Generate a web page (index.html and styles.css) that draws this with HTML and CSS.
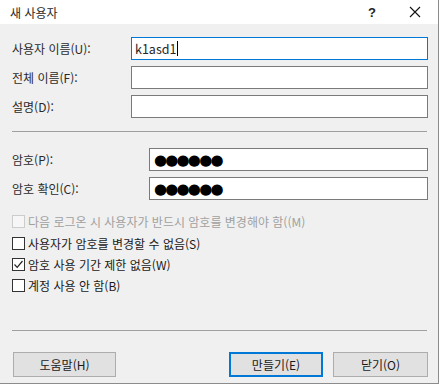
FILE: index.html
```html
<!DOCTYPE html>
<html lang="ko">
<head>
  <meta charset="UTF-8">
  <title>새 사용자</title>
  <link rel="stylesheet" href="styles.css">
</head>
<body>
  <div class="dialog">
    <!-- Barra de título -->
    <div class="titlebar">
      <span class="title">새 사용자</span>
      <span class="help">?</span>
      <span class="close">
        <svg width="12" height="12" viewBox="0 0 12 12"><path d="M1 1 L11 11 M11 1 L1 11" stroke="#111" stroke-width="1.1" fill="none"/></svg>
      </span>
    </div>

    <div class="content">
      <div class="row">
        <label class="label">사용자 이름(U):</label>
        <div class="field focus">k1asd1<span class="caret"></span></div>
      </div>
      <div class="row">
        <label class="label">전체 이름(F):</label>
        <div class="field"></div>
      </div>
      <div class="row">
        <label class="label">설명(D):</label>
        <div class="field"></div>
      </div>

      <div class="separator sep-top"></div>

      <div class="row">
        <label class="label wide">암호(P):</label>
        <div class="field dots">●●●●●●</div>
      </div>
      <div class="row">
        <label class="label wide">암호 확인(C):</label>
        <div class="field dots">●●●●●●</div>
      </div>

      <div class="checks">
        <div class="check disabled"><span class="box"></span>다음 로그온 시 사용자가 반드시 암호를 변경해야 함((M)</div>
        <div class="check"><span class="box"></span>사용자가 암호를 변경할 수 없음(S)</div>
        <div class="check"><span class="box">
          <svg width="11" height="11" viewBox="0 0 11 11"><path d="M1.5 5.5 L4.2 8.3 L9.5 2" stroke="#222" stroke-width="1.2" fill="none"/></svg>
        </span>암호 사용 기간 제한 없음(W)</div>
        <div class="check"><span class="box"></span>계정 사용 안 함(B)</div>
      </div>

      <div class="separator sep-bottom"></div>

      <div class="buttons">
        <button class="btn btn-help">도움말(H)</button>
        <div class="spacer"></div>
        <button class="btn btn-default">만들기(E)</button>
        <button class="btn">닫기(O)</button>
      </div>
    </div>
  </div>
</body>
</html>
```

FILE: styles.css
```css
/* Corpo da página */
body {
  margin: 0;
  background-color: #ffffff;
  font-family: "Noto Sans CJK KR", "Noto Sans", sans-serif;
  font-size: 12px;
  color: #262626;
}

/* Janela do diálogo */
.dialog {
  width: 438px;
  height: 383px;
  display: flex;
  flex-direction: column;
  border-right: 1px solid #8c8c8c;
  border-bottom: 1px solid #8c8c8c;
}

/* Barra de título */
.titlebar {
  height: 24px;
  background-color: #ffffff;
  display: flex;
  align-items: center;
  padding-left: 10px;
}

.title {
  flex: 1;
  font-size: 12px;
}

.help {
  width: 20px;
  font-family: "Liberation Sans", sans-serif;
  font-size: 13px;
  font-weight: bold;
  color: #222;
}

.close {
  width: 46px;
  display: flex;
  justify-content: center;
  padding-left: 4px;
}

/* Área principal */
.content {
  flex: 1;
  background-color: #f0f0f0;
  padding: 13px 10px 0 12px;
  display: flex;
  flex-direction: column;
}

.row {
  display: flex;
  align-items: center;
  height: 23px;
  margin-bottom: 6px;
}

.label {
  width: 119px;
  color: #2a2a2a;
}

.label.wide {
  width: 137px;
}

.field {
  flex: 1;
  height: 21px;
  border: 1px solid #7a7a7a;
  background-color: #ffffff;
  box-sizing: content-box;
  display: flex;
  align-items: center;
  padding-left: 3px;
  font-size: 12.5px;
}

.field.focus {
  border-color: #0078d7;
}

.caret {
  display: inline-block;
  width: 1px;
  height: 15px;
  background-color: #000;
  margin-left: 1px;
}

.dots {
  font-family: "DejaVu Sans", sans-serif;
  font-size: 15px;
  letter-spacing: -1.8px;
  color: #000;
  padding-left: 4px;
}

/* Separadores */
.separator {
  height: 1px;
  background-color: #a0a0a0;
  margin-right: 1px;
}

.sep-top {
  margin-top: 7px;
  margin-bottom: 16px;
}

.sep-bottom {
  margin-top: 33px;
}

/* Caixas de seleção */
.checks {
  margin-top: 5px;
  display: flex;
  flex-direction: column;
}

.check {
  height: 21.4px;
  display: flex;
  align-items: center;
  color: #1a1a1a;
}

.check .box {
  width: 11px;
  height: 11px;
  border: 1px solid #333;
  background-color: #ffffff;
  margin-right: 3px;
  display: flex;
  align-items: center;
  justify-content: center;
}

.check.disabled {
  color: #a0a0a0;
}

.check.disabled .box {
  border-color: #cccccc;
  background-color: #f6f6f6;
}

/* Botões */
.buttons {
  display: flex;
  margin-top: 21px;
  padding-left: 1px;
}

.spacer {
  flex: 1;
}

.btn {
  height: 25px;
  background-color: #e1e1e1;
  border: 1px solid #adadad;
  font-family: "Noto Sans CJK KR", sans-serif;
  font-size: 12px;
  color: #1a1a1a;
  padding: 0;
}

.btn-help {
  width: 103px;
}

.btn-default {
  width: 94px;
  border: 2px solid #0078d7;
  margin-right: 10px;
}

.btn + .btn:last-child {
  width: 95px;
}
```
